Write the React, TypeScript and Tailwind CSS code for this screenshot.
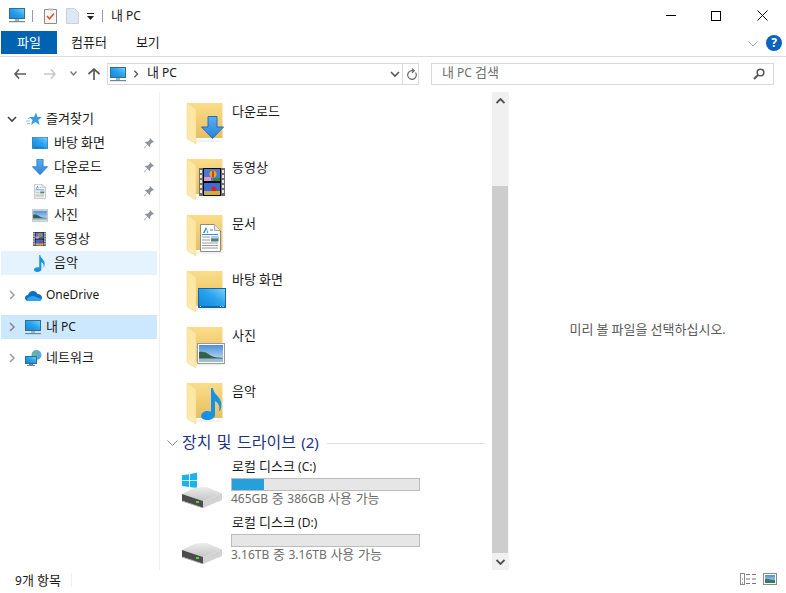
import React from "react";

type P = { x?: number; y?: number; w: number; h: number; className?: string };

function T({ s, k = "text-[13px]" }: { s: string; k?: string }) {
  return (
    <>
      {s.split(/([가-힣]+)/).map((p, i) =>
        /[가-힣]/.test(p) ? (
          <span key={i} className={k}>{p}</span>
        ) : (
          <React.Fragment key={i}>{p}</React.Fragment>
        )
      )}
    </>
  );
}

function Defs() {
  return (
    <svg width="0" height="0" className="absolute">
      <defs>
        <linearGradient id="scr" x1="0" y1="1" x2="1" y2="0">
          <stop offset="0" stopColor="#0f86d8" />
          <stop offset="0.55" stopColor="#2ba3ee" />
          <stop offset="1" stopColor="#7fd0fa" />
        </linearGradient>
        <linearGradient id="arr" x1="0" y1="0" x2="0" y2="1">
          <stop offset="0" stopColor="#5aaef0" />
          <stop offset="1" stopColor="#2a83d8" />
        </linearGradient>
        <linearGradient id="fld" x1="0" y1="0" x2="0" y2="1">
          <stop offset="0" stopColor="#fbdc88" />
          <stop offset="1" stopColor="#e6bf62" />
        </linearGradient>
        <linearGradient id="flap" x1="0" y1="0" x2="0" y2="1">
          <stop offset="0" stopColor="#fbe6a0" />
          <stop offset="1" stopColor="#fde9ad" />
        </linearGradient>
        <linearGradient id="sky" x1="0" y1="0" x2="0" y2="1">
          <stop offset="0" stopColor="#4c8fd8" />
          <stop offset="1" stopColor="#cfe6f7" />
        </linearGradient>
        <linearGradient id="disk" x1="0" y1="0" x2="0" y2="1">
          <stop offset="0" stopColor="#ececec" />
          <stop offset="1" stopColor="#c4c4c4" />
        </linearGradient>
      </defs>
    </svg>
  );
}

function Arrow({ x, y, w, h, className }: P) {
  return (
    <svg x={x} y={y} width={w} height={h} viewBox="0 0 23 23" className={className}>
      <path d="M7 .5h9v10.500h6.500L11.500 22.500.5 11H7z" fill="url(#arr)" stroke="#1f6fbf" strokeWidth="1" />
    </svg>
  );
}
function Desktop({ x, y, w, h, className }: P) {
  return (
    <svg x={x} y={y} width={w} height={h} viewBox="0 0 28 20" className={className}>
      <rect x=".5" y=".5" width="27" height="19" fill="url(#scr)" stroke="#0b68ad" />
      <rect x="1" y="18" width="26" height="1.500" fill="#0b68ad" />
      <path d="M2 18.500h1M22 18.500h1M24.500 18.500h1" stroke="#fff" />
    </svg>
  );
}
function Photo({ x, y, w, h, className }: P) {
  return (
    <svg x={x} y={y} width={w} height={h} viewBox="0 0 28 21" className={className}>
      <rect x=".5" y=".5" width="27" height="20" fill="#fff" stroke="#9a9a9a" />
      <rect x="2" y="2" width="24" height="17" fill="url(#sky)" />
      <path d="M2 9c4-1 7 0 11 3s8 2 13 3v1H2z" fill="#35604a" />
      <rect x="2" y="15.500" width="24" height="3.500" fill="#9fbdd0" />
    </svg>
  );
}
function Doc({ x, y, w, h, className }: P) {
  return (
    <svg x={x} y={y} width={w} height={h} viewBox="0 0 21 28" className={className}>
      <path d="M.5.500h14l6 6v21H.5z" fill="#fff" stroke="#8c8c8c" />
      <path d="M14.500.500v6h6" fill="#e8e8e8" stroke="#a8a8a8" />
      <path d="M6 3L3 9h1.500l2-4 .8 4h1z" fill="#2a7fd0" />
      <path d="M10 6h3M2 10.500h16" stroke="#2a8ad8" strokeWidth="1.200" />
      <path d="M2 13h8M2 16h8M2 19h16M2 21.500h16M2 24h16" stroke="#9a9a9a" strokeWidth="1" />
      <rect x="11" y="12.500" width="7.500" height="5" fill="#4f7f80" />
      <rect x="11" y="12.500" width="7.500" height="2" fill="#b7d4e8" />
    </svg>
  );
}
function Film({ x, y, w, h, className }: P) {
  return (
    <svg x={x} y={y} width={w} height={h} viewBox="0 0 26 28" className={className}>
      <rect x="0" y="0" width="26" height="28" fill="#6e6e6e" />
      <rect x="4" y="0" width="18" height="28" fill="#0b0b12" />
      {[2, 7, 12, 17, 22].map((t) => (
        <React.Fragment key={t}>
          <rect x="1" y={t} width="2" height="3" fill="#e8e8e8" />
          <rect x="23" y={t} width="2" height="3" fill="#e8e8e8" />
        </React.Fragment>
      ))}
      <rect x="5" y="1" width="16" height="12" fill="#4a78d8" />
      <rect x="5" y="15" width="16" height="12" fill="#3e6cd0" />
      <rect x="5" y="9" width="7" height="4" fill="#e39ab8" />
      <rect x="14" y="10" width="7" height="3" fill="#2f8a3a" />
      <rect x="5" y="23" width="16" height="4" fill="#c8b04a" />
      <circle cx="14" cy="6" r="3.500" fill="#e8a81c" />
      <path d="M14 3v6" stroke="#c52020" strokeWidth="1.500" />
      <circle cx="15" cy="21" r="2.500" fill="#d22" />
      <circle cx="15" cy="25" r="2" fill="#e8a81c" />
    </svg>
  );
}
function Music({ x, y, w, h, className }: P) {
  return (
    <svg x={x} y={y} width={w} height={h} viewBox="0 0 21 32" className={className}>
      <path
        d="M10 0h1.800c.8 4 3 6 5.500 9 3.300 4 4 8.500 1.700 14l-1-.4c1.300-4-.2-7.500-4-9.500v14c0 3-3.500 5-7.500 5C2.500 32.100 0 30.500 0 28c0-3 3.500-5 6.500-5 1.300 0 2.600.2 3.500.800z"
        fill="#1591e6"
      />
    </svg>
  );
}
function Folder({ children }: { children?: React.ReactNode }) {
  return (
    <svg width="48" height="48" viewBox="0 0 48 48" className="shrink-0">
      <path d="M8 43h30l6-2H12z" fill="#ececec" opacity=".7" />
      <path d="M6 4h35.500v35H15v-3H6z" fill="url(#fld)" />
      <path d="M6 4l9 6v35l-9-5.500z" fill="url(#flap)" stroke="#f0d48a" strokeWidth=".5" />
      {children}
    </svg>
  );
}
function Monitor({ className }: { className?: string }) {
  return (
    <svg viewBox="0 0 16 15" className={className}>
      <rect x=".5" y=".5" width="15" height="10" fill="url(#scr)" stroke="#2d6f92" />
      <rect x="6" y="11" width="4" height="2" fill="#9fb3bd" />
      <rect x="0" y="13" width="16" height="1.200" fill="#6d8796" />
    </svg>
  );
}
function Pin() {
  return (
    <svg width="10" height="11" viewBox="0 0 10 11" className="shrink-0">
      <path d="M6 0l4 4-1 .6-.7-.2L6.200 6.500 6.300 8.500 5.500 9 3.400 6.800.6 10.500 0 10 3.200 6.500 1 4.500l.6-.8 2 .1L5.700 1.700 5.500 1z" fill="#8f959c" />
    </svg>
  );
}
function Chev({ dir, className }: { dir: "r" | "d"; className?: string }) {
  return (
    <svg width="10" height="10" viewBox="0 0 10 10" className={className}>
      <path d={dir === "r" ? "M3 1l4 4-4 4" : "M1 3l4 4 4-4"} fill="none" stroke="currentColor" strokeWidth="1.600" />
    </svg>
  );
}
function Drive({ win }: { win?: boolean }) {
  return (
    <svg width="48" height="40" viewBox="0 0 48 40" className="shrink-0">
      {win && (
        <g fill="#19b4ee">
          <path d="M3 5.200l7-1v6H3zM11 4l7-1.200v7.400h-7zM3 11h7v6l-7-1zM11 11h7v7.200l-7-1.100z" />
        </g>
      )}
      <path d="M3 24l13-6.500 12-.5 15 6.500L24 31z" fill="url(#disk)" />
      <path d="M3 24l21 7v7L3 31z" fill="#4c4c4c" />
      <path d="M24 31l19-7.500v6.500L24 38z" fill="#d2d2d2" />
      <path d="M3 30.500l21 7v.8L3 31.500z" fill="#b4b4b4" />
      <rect x="17" y="31" width="3" height="2" fill="#52d04a" />
    </svg>
  );
}

function NavRow({ icon, label, pin, active }: { icon: React.ReactNode; label: string; pin?: boolean; active?: boolean }) {
  return (
    <div className={`mx-px h-6 w-[156px] flex items-center ${active ? "bg-[#e5f3ff]" : ""}`}>
      <div className="w-[53px] pl-[31px] flex justify-start items-center shrink-0">{icon}</div>
      <span className="flex-1 pb-px text-[#1a1a1a] whitespace-pre"><T s={label} /></span>
      {pin && <span className="mr-[3px]"><Pin /></span>}
    </div>
  );
}

function FolderRow({ label, overlay }: { label: string; overlay: React.ReactNode }) {
  return (
    <div className="h-14 pl-[21px] flex items-start">
      <Folder>{overlay}</Folder>
      <span className="ml-[3px] mt-[3px] leading-[18px] text-[#1a1a1a] whitespace-pre"><T s={label} /></span>
    </div>
  );
}

function DriveRow({ name, used, sub, win }: { name: string; used: number; sub: string; win?: boolean }) {
  return (
    <div className="h-14 pl-[19px] flex items-start">
      <div className="w-[50px] pt-[11px] shrink-0"><Drive win={win} /></div>
      <div className="w-[189px] ml-[2px]">
        <div className="h-[18px] leading-[14px] pl-px text-[#1a1a1a] whitespace-pre"><T s={name} /></div>
        <div className="mt-px h-[13px] bg-[#e6e6e6] border border-[#bcbcbc]">
          <div className="h-full bg-[#26a0da]" style={{ width: used }} />
        </div>
        <div className="h-[18px] leading-[14px] text-[#6d6d6d] whitespace-pre [word-spacing:0.5px]"><T s={sub} /></div>
      </div>
    </div>
  );
}

export default function App() {
  return (
    <div className="relative w-[786px] h-[593px] bg-white overflow-hidden flex flex-col text-[12px] text-[#1a1a1a] font-['Noto_Sans','Noto_Sans_CJK_KR',sans-serif]">
      <Defs />
      {/* title bar */}
      <div className="h-[31px] flex items-center shrink-0">
        <Monitor className="ml-[9px] w-4 h-[15px]" />
        <div className="ml-[7px] w-px h-[12px] bg-[#9a9a9a]" />
        <svg width="13" height="16" viewBox="0 0 13 16" className="ml-[11px]">
          <path d="M.5 1.500h12v14H.5z" fill="#f6f6f6" stroke="#8a8a8a" />
          <rect x="4" y=".5" width="5" height="2" fill="#bdbdbd" />
          <path d="M3 8l2.500 2.800L10 5.500" fill="none" stroke="#d9501f" strokeWidth="1.500" />
        </svg>
        <svg width="13" height="16" viewBox="0 0 13 16" className="ml-[9px]">
          <path d="M.5.500h8l4 4v11H.5z" fill="#dfe7f2" stroke="#c5d0e0" />
        </svg>
        <svg width="7" height="7" viewBox="0 0 7 7" className="ml-[8px] mt-[2px]">
          <path d="M0 0h7v1H0zM0 3h7L3.500 7z" fill="#222" />
        </svg>
        <div className="ml-[8px] w-px h-[12px] bg-[#9a9a9a]" />
        <span className="ml-2 whitespace-pre"><T s="내 PC" /></span>
        <div className="flex-1" />
        <div className="w-[10px] h-px bg-black mr-[35px]" />
        <div className="w-[10px] h-[10px] border border-black mr-[36px]" />
        <svg width="11" height="11" viewBox="0 0 11 11" className="mr-[18px]">
          <path d="M.5.500l10 10M10.500.500l-10 10" stroke="#111" strokeWidth="1" />
        </svg>
      </div>
      {/* ribbon */}
      <div className="h-[24px] border-b border-[#dadbdc] box-content pb-px flex items-start shrink-0">
        <div className="ml-px w-[56px] h-[23px] bg-[#0063b1] text-white flex items-center justify-center"><span><T s="파일" /></span></div>
        <div className="ml-[14px] h-[23px] flex items-center whitespace-pre"><span><T s="컴퓨터" /></span></div>
        <div className="ml-[29px] h-[23px] flex items-center whitespace-pre"><span><T s="보기" /></span></div>
        <div className="flex-1" />
        <svg width="10" height="6" viewBox="0 0 10 6" className="mt-[10px] mr-[8px]">
          <path d="M.5.500L5 5 9.500.500" fill="none" stroke="#a8a8a8" />
        </svg>
        <div className="mt-[4px] mr-[4px] w-4 h-4 rounded-full bg-[#0b63c0] text-white text-[12px] font-bold flex items-center justify-center leading-none">?</div>
      </div>
      {/* nav */}
      <div className="h-[35px] flex items-start pt-[6px] shrink-0">
        <svg width="12" height="10" viewBox="0 0 12 10" className="ml-[14px] mt-[6px]">
          <path d="M5 .5L1 5l4 4.500M1 5h11" fill="none" stroke="#5b5b5b" strokeWidth="1.600" />
        </svg>
        <svg width="12" height="10" viewBox="0 0 12 10" className="ml-[18px] mt-[6px]">
          <path d="M7 .5L11 5 7 9.500M11 5H0" fill="none" stroke="#c8c8c8" strokeWidth="1.600" />
        </svg>
        <svg width="7" height="5" viewBox="0 0 7 5" className="ml-[14px] mt-[8px]">
          <path d="M.5.500L3.500 4l3-3.500" fill="none" stroke="#777" strokeWidth="1.300" />
        </svg>
        <svg width="12" height="12" viewBox="0 0 12 12" className="ml-[11px] mt-[5px]">
          <path d="M.5 6L6 1l5.500 5M6 1v11" fill="none" stroke="#5b5b5b" strokeWidth="1.700" />
        </svg>
        <div className="ml-[7px] w-[312px] h-[22px] border border-[#d9d9d9] flex items-center">
          <Monitor className="ml-[2px] w-4 h-[15px]" />
          <Chev dir="r" className="ml-[6px] text-[#555] w-2 h-2" />
          <span className="ml-[7px] pb-[2px] whitespace-pre"><T s="내 PC" /></span>
          <div className="flex-1" />
          <Chev dir="d" className="text-[#555] mr-[2px]" />
          <div className="h-full w-px bg-[#d9d9d9] mr-[3px]" />
          <svg width="11" height="12" viewBox="0 0 11 12" className="mr-[1px]">
            <path d="M9.500 4.500A4.300 4.300 0 1 1 5.500 2.700H8M6 .5L8.300 2.700 6 4.800" fill="none" stroke="#6a6a6a" strokeWidth="1.200" />
          </svg>
        </div>
        <div className="ml-[12px] w-[343px] h-[22px] border border-[#d9d9d9] flex items-center justify-between">
          <span className="ml-[10px] pb-[2px] text-[#6d6d6d] whitespace-pre"><T s="내 PC 검색" /></span>
          <svg width="12" height="12" viewBox="0 0 12 12" className="mr-[8px]">
            <circle cx="7.500" cy="4.500" r="3.300" fill="none" stroke="#555" strokeWidth="1.500" />
            <path d="M5 7L1 11" stroke="#555" strokeWidth="2" />
          </svg>
        </div>
      </div>
      {/* body */}
      <div className="flex-1 flex min-h-0">
        {/* sidebar */}
        <div className="w-[160px] shrink-0 border-r border-[#f0f0f0] pt-[15px]">
          <div className="h-6 flex items-center">
            <Chev dir="d" className="ml-[7px] text-[#444]" />
            <svg width="16" height="15" viewBox="0 0 16 15" className="ml-[9px]">
              <path d="M10 .5l1.500 4.500H16l-3.700 3 1.300 5-4.100-3-4.500 3 1.600-5L3 5h5z" fill="#3d9be0" />
              <path d="M0 9h4M1 11.500h3M2 6.500h2" stroke="#8cc6ee" />
            </svg>
            <span className="ml-[4px] whitespace-pre"><T s="즐겨찾기" /></span>
          </div>
          <NavRow icon={<Desktop w={16} h={12} />} label="바탕 화면" pin />
          <NavRow icon={<Arrow w={16} h={16} />} label="다운로드" pin />
          <NavRow icon={<Doc w={12} h={15} className="ml-[2px]" />} label="문서" pin />
          <NavRow icon={<Photo w={16} h={13} />} label="사진" pin />
          <NavRow icon={<Film w={13} h={14} className="ml-px" />} label="동영상" />
          <NavRow icon={<Music w={11} h={17} className="ml-[2px]" />} label="음악" active />
          <div className="mt-2 h-6 flex items-center">
            <Chev dir="r" className="ml-[7px] text-[#a0a0a0]" />
            <svg width="17" height="11" viewBox="0 0 17 11" className="ml-[8px]">
              <path d="M3.500 11C1 11 0 9.500 0 8c0-2 1.500-3 3-3 .8-2.500 2.500-4 5-4 2.200 0 3.700 1 4.500 3 2.500 0 4.500 1.500 4.500 3.700 0 2-1.500 3.300-3.500 3.300z" fill="#0f6fc6" />
              <path d="M3 11c-1.500-1-1.500-3 .5-4l5-1 8 3c-.5 1.200-1.500 2-3 2z" fill="#2da5ec" />
            </svg>
            <span className="ml-1 whitespace-pre">OneDrive</span>
          </div>
          <div className="mt-2 mx-px w-[156px] h-6 bg-[#cce8ff] flex items-center">
            <Chev dir="r" className="ml-[6px] text-[#8a8a8a]" />
            <Monitor className="ml-2 w-4 h-[15px]" />
            <span className="ml-[5px] whitespace-pre"><T s="내 PC" /></span>
          </div>
          <div className="mt-[7px] h-6 flex items-center">
            <Chev dir="r" className="ml-[7px] text-[#a0a0a0]" />
            <svg width="17" height="16" viewBox="0 0 17 16" className="ml-[8px]">
              <circle cx="11.500" cy="5" r="5" fill="#5aa9d8" />
              <path d="M9 3c2-1 3 0 3 2l-2 2-2-2z" fill="#7bb86a" />
              <rect x=".5" y="6.500" width="11" height="7" fill="url(#scr)" stroke="#2d6f92" />
              <rect x="4" y="14" width="4" height="1" fill="#6d8796" />
              <rect x="2" y="15" width="8" height="1" fill="#6d8796" />
            </svg>
            <span className="ml-1 whitespace-pre"><T s="네트워크" /></span>
          </div>
        </div>
        {/* content */}
        <div className="w-[332px] shrink-0 pt-[7px]">
          <FolderRow label="다운로드" overlay={<Arrow x={20} y={17} w={23} h={23} />} />
          <FolderRow label="동영상" overlay={<Film x={18} y={13} w={26} h={28} />} />
          <FolderRow label="문서" overlay={<Doc x={19} y={13} w={21} h={28} />} />
          <FolderRow label="바탕 화면" overlay={<Desktop x={17} y={21} w={28} h={20} />} />
          <FolderRow label="사진" overlay={<Photo x={16} y={20} w={28} h={21} />} />
          <FolderRow label="음악" overlay={<Music x={20} y={9} w={21} h={32} />} />
          <div className="h-[16px] mb-2 pl-[7px] flex items-center">
            <svg width="11" height="7" viewBox="0 0 11 7">
              <path d="M.5.500l5 5 5-5" fill="none" stroke="#8a8a8a" />
            </svg>
            <span className="ml-[4px] pb-[2px] text-[15px] leading-[16px] text-[#1e3287] whitespace-pre [word-spacing:1.500px]"><T s="장치 및 드라이브 (2)" k="text-[16px]" /></span>
            <div className="ml-[8px] flex-1 mr-[7px] h-px bg-[#e2e2e2]" />
          </div>
          <DriveRow name="로컬 디스크 (C:)" used={32} sub="465GB 중 386GB 사용 가능" win />
          <DriveRow name="로컬 디스크 (D:)" used={0} sub="3.16TB 중 3.16TB 사용 가능" />
        </div>
        {/* scrollbar */}
        <div className="w-[17px] shrink-0 bg-[#f0f0f0] border-r border-[#f4f4f4] flex flex-col h-[478px]">
          <div className="h-[18px] flex items-center justify-center">
            <svg width="9" height="6" viewBox="0 0 9 6"><path d="M.5 5L4.500 1l4 4" fill="none" stroke="#505050" strokeWidth="1.800" /></svg>
          </div>
          <div className="h-[76px]" />
          <div className="h-[367px] bg-[#cdcdcd]" />
          <div className="h-[17px] flex items-center justify-center">
            <svg width="9" height="6" viewBox="0 0 9 6"><path d="M.5 1l4 4 4-4" fill="none" stroke="#505050" strokeWidth="1.800" /></svg>
          </div>
        </div>
        {/* preview */}
        <div className="flex-1 flex items-center justify-center text-[#5a5a5a] whitespace-pre"><span className="pb-[2px]"><T s="미리 볼 파일을 선택하십시오." /></span></div>
      </div>
      {/* status */}
      <div className="h-[23px] shrink-0 flex items-start">
        <span className="ml-[15px] leading-[20px] whitespace-pre"><T s="9개 항목" /></span>
        <div className="ml-[10px] mt-[3px] w-px h-[14px] bg-[#f0f0f0]" />
        <div className="flex-1" />
        <svg width="16" height="12" viewBox="0 0 16 12" className="mt-[3px]">
          <rect x=".5" y=".5" width="4" height="11" fill="#fff" stroke="#8a8a8a" />
          <path d="M6 1.500h4M12 1.500h4M6 6h4M12 6h4M6 10.500h4M12 10.500h4" stroke="#777" />
          <rect x="2" y="5.500" width="1" height="1" fill="#3a7fd0" />
          <rect x="2" y="9.500" width="1" height="1" fill="#c04040" />
        </svg>
        <svg width="14" height="12" viewBox="0 0 14 12" className="mt-[3px] ml-[7px] mr-[9px]">
          <rect x=".5" y=".5" width="13" height="11" fill="#fff" stroke="#8a8a8a" />
          <rect x="2" y="2" width="10" height="8" fill="url(#sky)" />
          <path d="M2 6c3-1 5 1 10 1v3H2z" fill="#3d7a5a" />
        </svg>
      </div>
    </div>
  );
}
